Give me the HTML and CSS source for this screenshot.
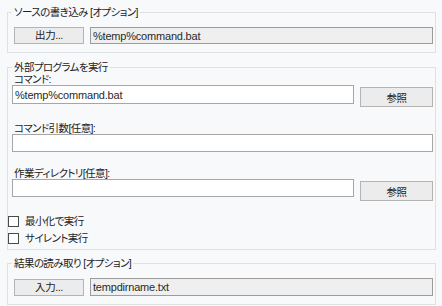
FILE: index.html
```html
<!DOCTYPE html>
<html lang="ja">
<head>
    <meta charset="UTF-8">
    <title>外部プログラム</title>
    <link rel="stylesheet" href="styles.css">
</head>
<body>
    <!-- source -->
    <fieldset class="group group-first">
        <legend>ソースの書き込み [オプション]</legend>
        <div class="row io-row">
            <button class="button io-button">出力...</button>
            <input type="text" class="field readonly" value="%temp%command.bat" readonly>
        </div>
    </fieldset>

    <!-- external program -->
    <fieldset class="group group-program">
        <legend>外部プログラムを実行</legend>
        <label class="label label-first">コマンド:</label>
        <div class="row">
            <input type="text" class="field field-cmd" value="%temp%command.bat">
            <button class="button browse">参照</button>
        </div>

        <label class="label">コマンド引数[任意]:</label>
        <div class="row">
            <input type="text" class="field field-args" value="">
        </div>

        <label class="label">作業ディレクトリ[任意]:</label>
        <div class="row">
            <input type="text" class="field field-cmd" value="">
            <button class="button browse">参照</button>
        </div>

        <label class="check-row check-first"><input type="checkbox" class="check"> 最小化で実行</label>
        <label class="check-row"><input type="checkbox" class="check"> サイレント実行</label>
    </fieldset>

    <!-- result -->
    <fieldset class="group group-result">
        <legend>結果の読み取り [オプション]</legend>
        <div class="row io-row">
            <button class="button io-button">入力...</button>
            <input type="text" class="field readonly tall" value="tempdirname.txt" readonly>
        </div>
    </fieldset>
</body>
</html>
```

FILE: styles.css
```css
body {
    margin: 0;
    padding: 5px 6px 0 7px;
    background-color: #f8f9fb;
    font-family: "Liberation Sans", "Noto Sans CJK JP", sans-serif;
    font-size: 11px;
    font-feature-settings: "palt";
    color: #222;
}
.group {
    margin: 0;
    padding: 0 1px 8px 4px;
    border: 1px solid #dde0e4;
    min-width: 0;
}
.group legend {
    padding: 0 2px;
    margin-left: 0;
    line-height: 14px;
    font-size: 10.5px;
    letter-spacing: -0.6px;
    color: #222;
}
.group-program {
    margin-top: 7px;
    padding-bottom: 3px;
}
.group-result {
    margin-top: 6px;
}
.row {
    display: flex;
    align-items: flex-start;
    gap: 6px;
}
.io-row {
    margin: 8px 0 0 2px;
    align-items: flex-end;
}
.button {
    font-family: inherit;
    font-size: 10.5px;
    letter-spacing: -0.4px;
    font-feature-settings: "palt";
    color: #222;
    background: #ececec;
    border: 1px solid #b4b4b4;
    padding: 0;
    margin: 0;
    box-sizing: border-box;
}
.io-button {
    width: 70px;
    height: 17px;
    line-height: 15px;
}
.browse {
    width: 73px;
    height: 20px;
    margin-top: 2px;
    margin-right: 1px;
}
.field {
    font-family: inherit;
    font-size: 11px;
    letter-spacing: -0.2px;
    color: #2a2a2a;
    background: #fff;
    border: 1px solid #a6a6a6;
    box-sizing: border-box;
    margin: 0;
    padding: 0 2px;
    height: 18px;
    outline: none;
    min-width: 0;
}
.readonly {
    flex: 1;
    height: 17px;
    background: #efefef;
    border-color: #9c9c9c;
    margin-right: 1px;
}
.readonly.tall {
    height: 18px;
}
.field-cmd {
    flex: 1;
}
.field-args {
    flex: 1;
    margin-right: 1px;
}
.label {
    display: block;
    margin: 15px 0 0 2px;
    line-height: 12px;
    font-size: 10.5px;
    letter-spacing: -0.6px;
}
.label-first {
    margin-top: -1px;
}
.label-first + .row .field {
    height: 19px;
}
.check-row {
    display: flex;
    align-items: center;
    gap: 6px;
    margin-left: -4px;
    line-height: 16px;
    margin-top: 1px;
    font-size: 10.5px;
    letter-spacing: -0.6px;
}
.check-first {
    margin-top: 12px;
}
.check {
    appearance: none;
    width: 11px;
    height: 11px;
    margin: 0;
    border: 1px solid #4a4a4a;
    background: #fff;
    box-sizing: border-box;
}
```
